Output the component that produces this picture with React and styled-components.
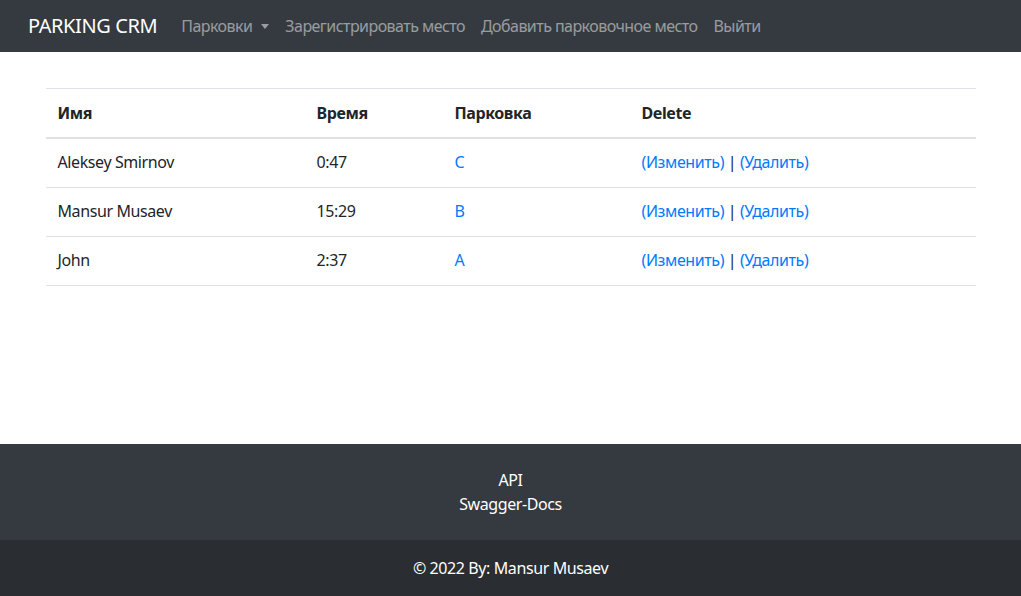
import React from 'react';
import styled, { createGlobalStyle } from 'styled-components';

const GlobalStyle = createGlobalStyle`
  body {
    margin: 0;
    font-family: "Noto Sans", "Open Sans", sans-serif;
    font-size: 16px;
    line-height: 1.5;
    color: #212529;
    background: #fff;
  }
`;

const Navbar = styled.nav`
  display: flex;
  align-items: center;
  height: 52px;
  padding: 0 16px 0 28px;
  background: #343a40;
  box-sizing: border-box;
`;

const Brand = styled.a`
  color: #fff;
  font-size: 20px;
  line-height: 30px;
  margin-right: 16px;
  text-decoration: none;
  letter-spacing: -0.4px;
`;

const NavLinks = styled.div`
  display: flex;
  align-items: center;
`;

const NavLink = styled.a`
  display: flex;
  align-items: center;
  color: rgba(255, 255, 255, 0.5);
  padding: 8px 8px;
  text-decoration: none;
  font-size: 16px;
  letter-spacing: -0.55px;
`;

const Caret = styled.span`
  display: inline-block;
  margin-left: 9px;
  border-top: 5px solid currentColor;
  border-left: 4.5px solid transparent;
  border-right: 4.5px solid transparent;
`;

const Main = styled.main`
  min-height: 392px;
  padding-top: 36px;
  box-sizing: border-box;
`;

const Container = styled.div`
  width: 930px;
  margin: 0 auto;
`;

const Table = styled.table`
  width: 100%;
  border-collapse: collapse;
  table-layout: fixed;
`;

const Th = styled.th`
  box-sizing: border-box;
  width: ${p => p.w}px;
  text-align: left;
  font-weight: 700;
  padding: 12px;
  border-top: 1px solid #dee2e6;
  border-bottom: 2px solid #dee2e6;
  letter-spacing: -0.4px;
`;

const Td = styled.td`
  padding: 11px 12px 13px;
  border-top: 1px solid #dee2e6;
  letter-spacing: -0.4px;
`;

const Tr = styled.tr`
  &:last-child td {
    border-bottom: 1px solid #dee2e6;
  }
`;

const Link = styled.a`
  color: #007bff;
  text-decoration: none;
`;

const FooterTop = styled.footer`
  background: #343a40;
  color: #fff;
  padding: 24px 0;
  display: flex;
  flex-direction: column;
  align-items: center;
`;

const FooterLink = styled.a`
  color: #fff;
  text-decoration: none;
  letter-spacing: -0.4px;
`;

const Copyright = styled.div`
  background: #2a2d31;
  color: #fff;
  text-align: center;
  padding: 16px 0;
  letter-spacing: -0.4px;
`;

const rows = [
  { name: 'Aleksey Smirnov', time: '0:47', parking: 'C' },
  { name: 'Mansur Musaev', time: '15:29', parking: 'B' },
  { name: 'John', time: '2:37', parking: 'A' },
];

const App = () => (
  <>
    <GlobalStyle />
    <Navbar>
      <Brand href="#">PARKING CRM</Brand>
      <NavLinks>
        <NavLink href="#">Парковки<Caret /></NavLink>
        <NavLink href="#">Зарегистрировать место</NavLink>
        <NavLink href="#">Добавить парковочное место</NavLink>
        <NavLink href="#">Выйти</NavLink>
      </NavLinks>
    </Navbar>
    <Main>
      <Container>
        <Table>
          <thead>
            <tr>
              <Th w={259}>Имя</Th>
              <Th w={138}>Время</Th>
              <Th w={187}>Парковка</Th>
              <Th w={346}>Delete</Th>
            </tr>
          </thead>
          <tbody>
            {rows.map(row => (
              <Tr key={row.name}>
                <Td>{row.name}</Td>
                <Td>{row.time}</Td>
                <Td><Link href="#">{row.parking}</Link></Td>
                <Td>
                  <Link href="#">(Изменить)</Link> | <Link href="#">(Удалить)</Link>
                </Td>
              </Tr>
            ))}
          </tbody>
        </Table>
      </Container>
    </Main>
    <FooterTop>
      <FooterLink href="#">API</FooterLink>
      <FooterLink href="#">Swagger-Docs</FooterLink>
    </FooterTop>
    <Copyright>© 2022 By: Mansur Musaev</Copyright>
  </>
);

export default App;
